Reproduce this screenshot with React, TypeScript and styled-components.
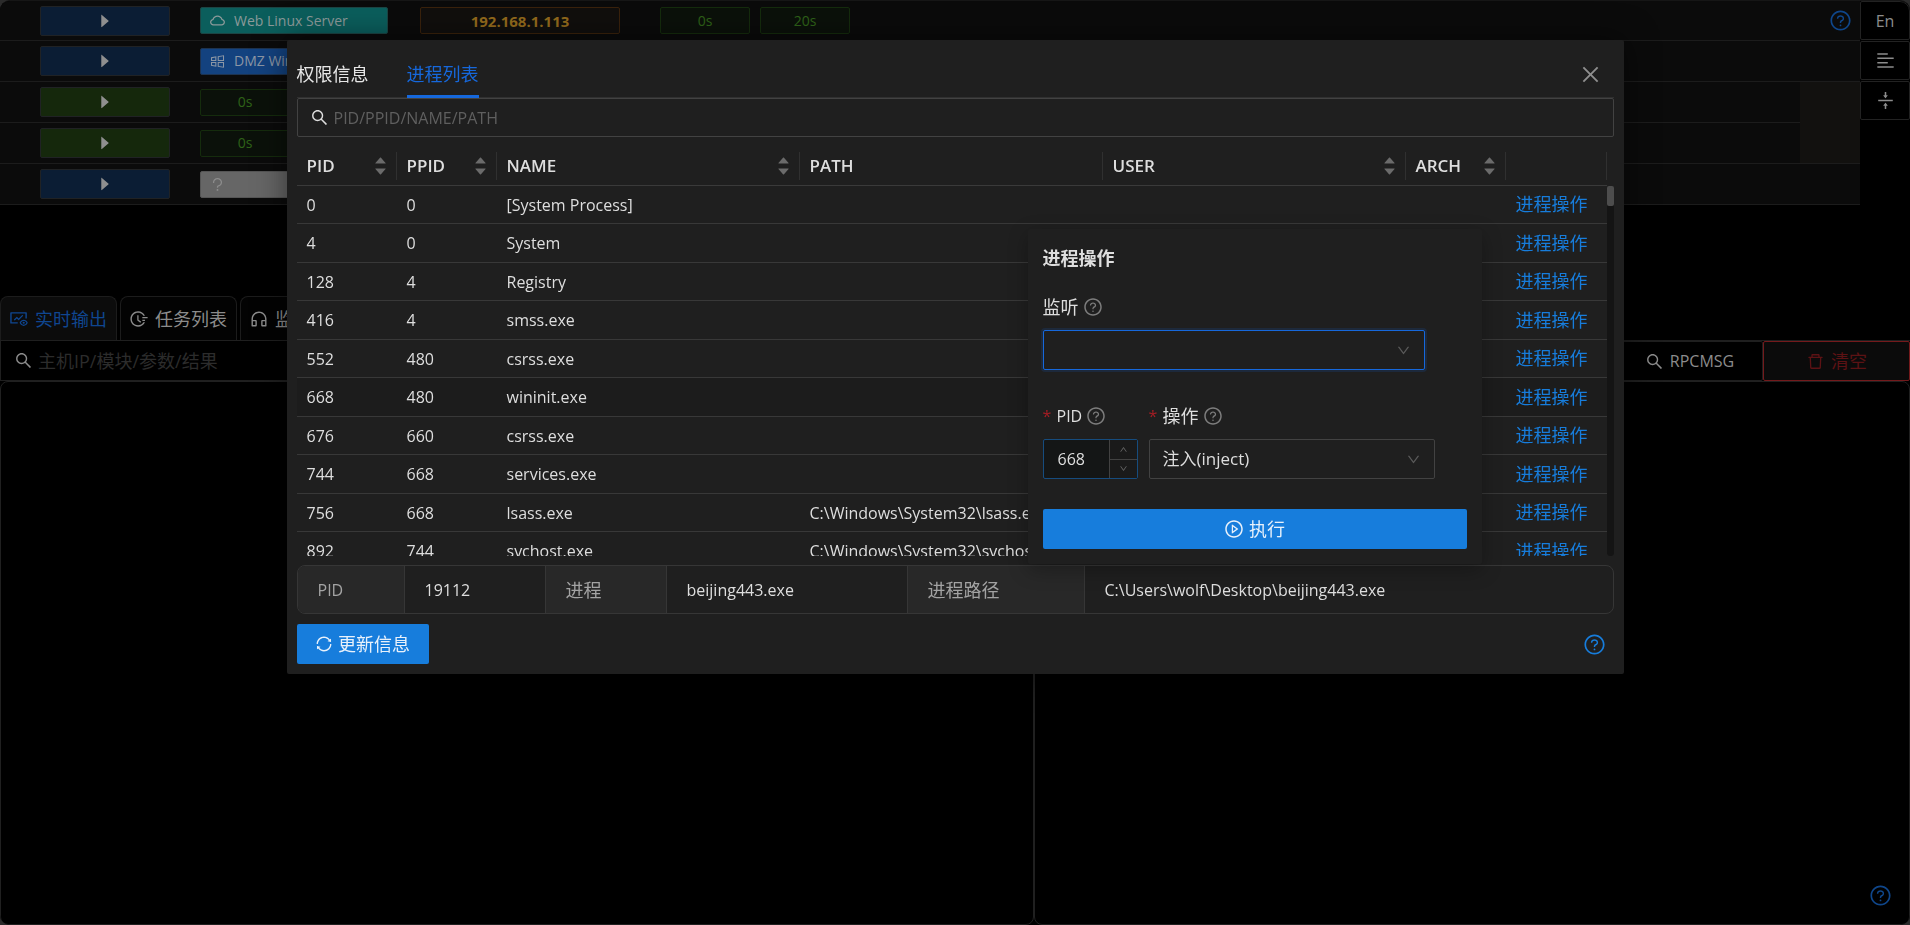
import React from "react";
import styled, { createGlobalStyle, css } from "styled-components";
import {
  AiFillCaretDown,
  AiFillCaretRight,
  AiFillCaretUp,
  AiOutlineAlignLeft,
  AiOutlineClose,
  AiOutlineCloud,
  AiOutlineCustomerService,
  AiOutlineDelete,
  AiOutlineDown,
  AiOutlineFieldTime,
  AiOutlineFundView,
  AiOutlinePlayCircle,
  AiOutlineQuestion,
  AiOutlineQuestionCircle,
  AiOutlineSearch,
  AiOutlineSync,
  AiOutlineUp,
  AiOutlineVerticalAlignMiddle,
  AiOutlineWindows,
} from "react-icons/ai";

const GlobalStyle = createGlobalStyle`
  * { box-sizing: border-box; }
  body {
    margin: 0;
    background: #2b2b2b;
    overflow: hidden;
  }
  body, button, input, select, table {
    font-family: "Open Sans", "Noto Sans CJK SC", sans-serif;
    font-size: 16px;
    line-height: 24px;
  }
  button { cursor: pointer; }
  svg { display: block; flex: none; }
`;

/* ---------- Host console behind the dialog ---------- */

const Page = styled.div`
  display: flex;
  flex-direction: column;
  min-height: 100vh;
  border-top: 1px solid #161616;
  border-radius: 10px;
  overflow: hidden;
  background: #000;
  color: #8c8c8c;
`;

const TopArea = styled.div`
  display: flex;
  align-items: flex-start;
  height: 295px;
`;

const HostTableWrap = styled.div`
  flex: 1;
  min-width: 0;
`;

const HostTable = styled.table`
  width: 100%;
  table-layout: fixed;
  border-collapse: separate;
  border-spacing: 0;
  background: #0b0b0b;
`;

const HostRow = styled.tr`
  height: 41px;
  &:first-child { height: 40px; }
`;

const HostCell = styled.td`
  padding: 0;
  border-bottom: 1px solid #1c1c1c;
`;

const PinnedCell = styled.td`
  padding: 0;
  background: #12110f;
  border-bottom: 1px solid #1c1c1c;
`;

const RowContent = styled.div`
  display: flex;
  align-items: center;
  padding-left: 40px;
`;

const ExpandButton = styled.button<{ $tone: "blue" | "green" }>`
  display: flex;
  align-items: center;
  justify-content: center;
  width: 130px;
  height: 30px;
  margin-right: 30px;
  padding: 0;
  border: 1px solid #202224;
  border-radius: 2px;
  color: #8f8f8f;
  background: ${(p) => (p.$tone === "blue" ? "#0b1d34" : "#15280c")};
`;

const tones = {
  cyan: css`background: #0b5e5c; border-color: #1c4544; color: #8c9a9a;`,
  blue: css`background: #13427f; border-color: #1d3350; color: #8b96a5;`,
  gray: css`background: #666; border-color: #555; color: #8c8c8c;`,
  orange: css`background: #110f0d; border-color: #3a220c; color: #936a1c;`,
  green: css`background: #0b110a; border-color: #152c0d; color: #2f6318;`,
};

const Tag = styled.span<{ $tone: keyof typeof tones; $width: number; $gap?: number }>`
  display: flex;
  align-items: center;
  justify-content: ${(p) => (p.$tone === "orange" || p.$tone === "green" ? "center" : "flex-start")};
  gap: 8px;
  width: ${(p) => p.$width}px;
  height: 27px;
  margin-right: ${(p) => p.$gap ?? 10}px;
  padding: 0 8px;
  border: 1px solid;
  border-radius: 2px;
  font-size: ${(p) => (p.$tone === "orange" ? 15 : 14)}px;
  font-weight: ${(p) => (p.$tone === "orange" ? 700 : 400)};
  white-space: nowrap;
  ${(p) => tones[p.$tone]}
`;

const RoundHelp = styled.button<{ $dim?: boolean }>`
  display: flex;
  padding: 0;
  margin: 0 8px 0 auto;
  border: 0;
  background: none;
  color: ${(p) => (p.$dim ? "#0f468a" : "#177ddc")};
`;

const SideRail = styled.nav`
  display: flex;
  flex-direction: column;
  gap: 1px;
  width: 50px;
`;

const RailButton = styled.button`
  display: flex;
  align-items: center;
  justify-content: center;
  height: 39px;
  padding: 0;
  border: 1px solid #222;
  border-radius: 2px;
  background: #000;
  color: #8c8c8c;
  &:first-child { border-top-right-radius: 10px; }
`;

const OutputTabs = styled.div`
  display: flex;
  gap: 3px;
  height: 45px;
  border-bottom: 1px solid #1f1f1f;
`;

const OutputTab = styled.button<{ $active?: boolean }>`
  display: flex;
  align-items: center;
  gap: 6px;
  width: 117px;
  padding: 0 0 0 8px;
  border: 1px solid #1c1c1c;
  border-bottom: 0;
  border-radius: 8px 8px 0 0;
  background: ${(p) => (p.$active ? "#0c0c0c" : "#030303")};
  color: ${(p) => (p.$active ? "#0f4690" : "#8c8c8c")};
  font-size: 18px;
  white-space: nowrap;
`;

const OutputToolbar = styled.div`
  display: flex;
  height: 40px;
`;

const OutputSearch = styled.label`
  display: flex;
  flex: 1;
  align-items: center;
  gap: 5px;
  padding-left: 13px;
  border: 1px solid #1f1f1f;
  border-top: 0;
`;

const ToolbarButton = styled.button<{ $danger?: boolean }>`
  display: flex;
  align-items: center;
  justify-content: center;
  gap: 6px;
  width: 147px;
  padding: 0;
  border: 1px solid ${(p) => (p.$danger ? "#741a1c" : "#1f1f1f")};
  border-radius: 2px;
  background: ${(p) => (p.$danger ? "#0b0b0b" : "#000")};
  color: ${(p) => (p.$danger ? "#5c1214" : "#8c8c8c")};
`;

const ToolbarText = styled.span<{ $cjk?: boolean }>`
  font-size: ${(p) => (p.$cjk ? 18 : 16)}px;
`;

const OutputPanels = styled.div`
  display: flex;
  flex: 1;
`;

const Panel = styled.section<{ $grow: number }>`
  display: flex;
  flex: ${(p) => p.$grow} 1 0;
  align-items: flex-end;
  justify-content: flex-end;
  padding: 0 9px 17px 0;
  border: 1px solid #202020;
  border-radius: 8px;
`;

/* ---------- Process dialog ---------- */

const Overlay = styled.div`
  position: fixed;
  inset: 0;
  display: flex;
  align-items: flex-start;
  justify-content: center;
  padding-top: 40px;
`;

const Dialog = styled.div`
  position: relative;
  width: 70%;
  padding: 0 10px 10px;
  border-radius: 2px;
  background: #1f1f1f;
  color: #dedede;
  box-shadow: 0 0 32px rgba(0, 0, 0, 0.5);
`;

const DialogHeader = styled.div`
  display: flex;
  align-items: center;
  height: 58px;
  border-bottom: 1px solid #303030;
`;

const DialogTab = styled.button<{ $active?: boolean }>`
  height: 58px;
  margin-right: 38px;
  padding: 14px 0 0;
  border: 0;
  border-bottom: 3px solid ${(p) => (p.$active ? "#1668dc" : "transparent")};
  background: none;
  color: ${(p) => (p.$active ? "#1668dc" : "#e6e6e6")};
  font-size: 18px;
`;

const CloseButton = styled.button`
  display: flex;
  margin: 12px 12px 0 auto;
  padding: 0;
  border: 0;
  background: none;
  color: #8f8f8f;
`;

const ProcessSearch = styled.label`
  display: flex;
  align-items: center;
  gap: 5px;
  height: 39px;
  padding-left: 12px;
  border: 1px solid #424242;
  border-radius: 2px;
`;

const TextInput = styled.input<{ $dim?: boolean; $cjk?: boolean }>`
  flex: 1;
  min-width: 0;
  padding: 0;
  border: 0;
  outline: 0;
  background: none;
  color: inherit;
  font-size: ${(p) => (p.$cjk ? 18 : 16)}px;
  &::placeholder {
    color: ${(p) => (p.$dim ? "#2c2c2c" : "#5f5f5f")};
    opacity: 1;
  }
`;

const TableViewport = styled.div`
  display: flex;
  height: 419px;
  overflow: hidden;
`;

const TableScroller = styled.div`
  flex: 1;
  min-width: 0;
`;

const ProcessTable = styled.table`
  width: 100%;
  table-layout: fixed;
  border-collapse: separate;
  border-spacing: 0;
`;

const HeadCell = styled.th`
  height: 49px;
  padding: 9px 0 0;
  border-bottom: 1px solid #3a3a3a;
  text-align: left;
  font-size: 17px;
  font-weight: 600;
`;

const HeadInner = styled.div`
  display: flex;
  align-items: center;
  justify-content: space-between;
  height: 28px;
  padding: 0 8px 0 10px;
  border-right: 1px solid #303030;
`;

const Sorter = styled.span`
  display: flex;
  flex-direction: column;
  color: #6b6b6b;
  svg + svg { margin-top: -4px; }
`;

const ProcessRow = styled.tr<{ $hovered: boolean }>`
  height: 38px;
  background: ${(p) => (p.$hovered ? "#1c1c1c" : "transparent")};
  &:nth-child(even) { height: 39px; }
`;

const Cell = styled.td`
  padding: 0 0 0 10px;
  border-bottom: 1px solid #383838;
  white-space: nowrap;
`;

const ActionLink = styled.a`
  color: #177ddc;
  font-size: 18px;
  text-decoration: none;
`;

const ScrollTrack = styled.div`
  width: 7px;
  margin-top: 49px;
  border-radius: 4px;
  background: #141414;
`;

const ScrollThumb = styled.div`
  height: 20px;
  border-radius: 2px;
  background: #4d4d4d;
`;

const Details = styled.dl`
  display: flex;
  height: 49px;
  margin: 9px 0 10px;
  border: 1px solid #363636;
  border-radius: 8px;
  overflow: hidden;
`;

const DetailLabel = styled.dt<{ $width: number; $cjk?: boolean }>`
  width: ${(p) => p.$width}px;
  padding: 12px 20px 0;
  border-right: 1px solid #363636;
  background: #282828;
  color: #a3a3a3;
  font-size: ${(p) => (p.$cjk ? 18 : 16)}px;
`;

const DetailValue = styled.dd<{ $width?: number }>`
  width: ${(p) => (p.$width ? `${p.$width}px` : "auto")};
  margin: 0;
  padding: 12px 20px 0;
  border-right: ${(p) => (p.$width ? "1px solid #363636" : "0")};
`;

const DialogFooter = styled.div`
  display: flex;
  align-items: center;
`;

const PrimaryButton = styled.button<{ $block?: boolean }>`
  display: flex;
  align-items: center;
  justify-content: center;
  gap: 5px;
  width: ${(p) => (p.$block ? "100%" : "132px")};
  height: 40px;
  padding: 0;
  border: 0;
  border-radius: 2px;
  background: #177ddc;
  color: #e8f1fb;
  font-size: 18px;
`;

/* ---------- Action popover ---------- */

const Popover = styled.form`
  position: absolute;
  top: 189px;
  right: 142px;
  width: 454px;
  padding: 15px;
  border-radius: 2px;
  background: #1f1f1f;
  box-shadow: 0 6px 20px rgba(0, 0, 0, 0.28);
`;

const PopoverTitle = styled.h3`
  margin: 0 0 21px;
  font-size: 18px;
  line-height: 28px;
  font-weight: 700;
`;

const FieldGroup = styled.div`
  display: flex;
  gap: 11px;
  margin-bottom: 32px;
  & + & { margin-bottom: 30px; }
`;

const Field = styled.div<{ $width: number }>`
  width: ${(p) => p.$width}px;
`;

const FieldLabel = styled.label<{ $latin?: boolean }>`
  display: flex;
  align-items: center;
  gap: 4px;
  height: 28px;
  margin-bottom: 9px;
  font-size: ${(p) => (p.$latin ? 16 : 18)}px;
  svg { color: #7d7d7d; }
`;

const Required = styled.span`
  width: 10px;
  color: #a61d24;
  font-size: 16px;
`;

const SelectWrap = styled.div`
  display: grid;
  align-items: center;
  > * { grid-area: 1 / 1; }
  svg {
    justify-self: end;
    margin-right: 14px;
    color: #5a5a5a;
    pointer-events: none;
  }
`;

const Select = styled.select<{ $focused?: boolean }>`
  appearance: none;
  width: 100%;
  height: 40px;
  padding: 0 13px;
  border: 1px solid ${(p) => (p.$focused ? "#1668dc" : "#424242")};
  border-radius: 2px;
  outline: 0;
  background: #1f1f1f;
  color: #dedede;
  font-size: 17px;
  box-shadow: ${(p) => (p.$focused ? "0 0 0 2px rgba(22, 104, 220, 0.15)" : "none")};
`;

const NumberBox = styled.div`
  display: flex;
  height: 40px;
  border: 1px solid #164c7e;
  border-radius: 2px;
  background: #141616;
`;

const NumberInput = styled.input`
  flex: 1;
  min-width: 0;
  padding: 0 0 0 14px;
  border: 0;
  outline: 0;
  background: none;
  color: #dedede;
`;

const Stepper = styled.div`
  display: flex;
  flex-direction: column;
  width: 28px;
  border-left: 1px solid #424242;
  background: #1a1a1a;
`;

const StepButton = styled.button`
  display: flex;
  flex: 1;
  align-items: center;
  justify-content: center;
  padding: 0;
  border: 0;
  background: none;
  color: #6b6b6b;
  & + & { border-top: 1px solid #424242; }
`;

type Process = { pid: number; ppid: number; name: string; path?: string };

const processes: Process[] = [
  { pid: 0, ppid: 0, name: "[System Process]" },
  { pid: 4, ppid: 0, name: "System" },
  { pid: 128, ppid: 4, name: "Registry" },
  { pid: 416, ppid: 4, name: "smss.exe" },
  { pid: 552, ppid: 480, name: "csrss.exe" },
  { pid: 668, ppid: 480, name: "wininit.exe" },
  { pid: 676, ppid: 660, name: "csrss.exe" },
  { pid: 744, ppid: 668, name: "services.exe" },
  { pid: 756, ppid: 668, name: "lsass.exe", path: "C:\\Windows\\System32\\lsass.exe" },
  { pid: 892, ppid: 744, name: "svchost.exe", path: "C:\\Windows\\System32\\svchost.exe" },
];

const columns: { title: string; width?: number; sortable?: boolean }[] = [
  { title: "PID", width: 100, sortable: true },
  { title: "PPID", width: 100, sortable: true },
  { title: "NAME", sortable: true },
  { title: "PATH" },
  { title: "USER", sortable: true },
  { title: "ARCH", width: 100, sortable: true },
  { title: "", width: 101 },
];

function Expand({ tone }: { tone: "blue" | "green" }) {
  return (
    <ExpandButton type="button" $tone={tone} aria-label="展开">
      <AiFillCaretRight size={18} />
    </ExpandButton>
  );
}

function Hosts() {
  return (
    <HostTableWrap>
      <HostTable>
        <colgroup>
          <col />
          <col style={{ width: 60 }} />
        </colgroup>
        <tbody>
          <HostRow>
            <HostCell>
              <RowContent>
                <Expand tone="blue" />
                <Tag $tone="cyan" $width={188} $gap={32}>
                  <AiOutlineCloud size={17} />
                  Web Linux Server
                </Tag>
                <Tag $tone="orange" $width={200} $gap={40}>192.168.1.113</Tag>
                <Tag $tone="green" $width={90}>0s</Tag>
                <Tag $tone="green" $width={90}>20s</Tag>
              </RowContent>
            </HostCell>
            <HostCell>
              <RoundHelp type="button" $dim aria-label="帮助">
                <AiOutlineQuestionCircle size={23} />
              </RoundHelp>
            </HostCell>
          </HostRow>
          <HostRow>
            <HostCell colSpan={2}>
              <RowContent>
                <Expand tone="blue" />
                <Tag $tone="blue" $width={188}>
                  <AiOutlineWindows size={17} />
                  DMZ Windows
                </Tag>
              </RowContent>
            </HostCell>
          </HostRow>
          <HostRow>
            <HostCell>
              <RowContent>
                <Expand tone="green" />
                <Tag $tone="green" $width={90}>0s</Tag>
              </RowContent>
            </HostCell>
            <PinnedCell rowSpan={2} />
          </HostRow>
          <HostRow>
            <HostCell>
              <RowContent>
                <Expand tone="green" />
                <Tag $tone="green" $width={90}>0s</Tag>
              </RowContent>
            </HostCell>
          </HostRow>
          <HostRow>
            <HostCell colSpan={2}>
              <RowContent>
                <Expand tone="blue" />
                <Tag $tone="gray" $width={188}>
                  <AiOutlineQuestion size={17} />
                </Tag>
              </RowContent>
            </HostCell>
          </HostRow>
        </tbody>
      </HostTable>
    </HostTableWrap>
  );
}

function ActionPopover() {
  return (
    <Popover onSubmit={(e) => e.preventDefault()}>
      <PopoverTitle>进程操作</PopoverTitle>
      <FieldGroup>
        <Field $width={382}>
          <FieldLabel htmlFor="listener">
            监听 <AiOutlineQuestionCircle size={20} />
          </FieldLabel>
          <SelectWrap>
            <Select id="listener" $focused defaultValue="">
              <option value=""></option>
            </Select>
            <AiOutlineDown size={15} />
          </SelectWrap>
        </Field>
      </FieldGroup>
      <FieldGroup>
        <Field $width={95}>
          <FieldLabel htmlFor="pid" $latin>
            <Required>*</Required>PID <AiOutlineQuestionCircle size={20} />
          </FieldLabel>
          <NumberBox>
            <NumberInput id="pid" type="text" inputMode="numeric" defaultValue="668" />
            <Stepper>
              <StepButton type="button" aria-label="增加"><AiOutlineUp size={9} /></StepButton>
              <StepButton type="button" aria-label="减少"><AiOutlineDown size={9} /></StepButton>
            </Stepper>
          </NumberBox>
        </Field>
        <Field $width={286}>
          <FieldLabel htmlFor="action">
            <Required>*</Required>操作 <AiOutlineQuestionCircle size={20} />
          </FieldLabel>
          <SelectWrap>
            <Select id="action" defaultValue="inject">
              <option value="inject">注入(inject)</option>
            </Select>
            <AiOutlineDown size={15} />
          </SelectWrap>
        </Field>
      </FieldGroup>
      <PrimaryButton type="submit" $block>
        <AiOutlinePlayCircle size={20} />
        执行
      </PrimaryButton>
    </Popover>
  );
}

function ProcessDialog() {
  return (
    <Overlay>
      <Dialog role="dialog" aria-label="进程列表">
        <DialogHeader>
          <DialogTab type="button">权限信息</DialogTab>
          <DialogTab type="button" $active>进程列表</DialogTab>
          <CloseButton type="button" aria-label="关闭">
            <AiOutlineClose size={23} />
          </CloseButton>
        </DialogHeader>
        <ProcessSearch>
          <AiOutlineSearch size={19} />
          <TextInput type="text" placeholder="PID/PPID/NAME/PATH" aria-label="PID/PPID/NAME/PATH" />
        </ProcessSearch>
        <TableViewport>
          <TableScroller>
            <ProcessTable>
              <colgroup>
                {columns.map((c, i) => (
                  <col key={i} style={{ width: c.width }} />
                ))}
              </colgroup>
              <thead>
                <tr>
                  {columns.map((c, i) => (
                    <HeadCell key={i} scope="col">
                      <HeadInner>
                        {c.title}
                        {c.sortable && (
                          <Sorter>
                            <AiFillCaretUp size={15} />
                            <AiFillCaretDown size={15} />
                          </Sorter>
                        )}
                      </HeadInner>
                    </HeadCell>
                  ))}
                </tr>
              </thead>
              <tbody>
                {processes.map((p) => (
                  <ProcessRow key={p.pid} $hovered={p.pid === 668}>
                    <Cell>{p.pid}</Cell>
                    <Cell>{p.ppid}</Cell>
                    <Cell>{p.name}</Cell>
                    <Cell>{p.path}</Cell>
                    <Cell />
                    <Cell />
                    <Cell>
                      <ActionLink href="#">进程操作</ActionLink>
                    </Cell>
                  </ProcessRow>
                ))}
              </tbody>
            </ProcessTable>
          </TableScroller>
          <ScrollTrack>
            <ScrollThumb />
          </ScrollTrack>
        </TableViewport>
        <Details>
          <DetailLabel $width={107}>PID</DetailLabel>
          <DetailValue $width={141}>19112</DetailValue>
          <DetailLabel $width={121} $cjk>进程</DetailLabel>
          <DetailValue $width={241}>beijing443.exe</DetailValue>
          <DetailLabel $width={177} $cjk>进程路径</DetailLabel>
          <DetailValue>C:\Users\wolf\Desktop\beijing443.exe</DetailValue>
        </Details>
        <DialogFooter>
          <PrimaryButton type="button">
            <AiOutlineSync size={18} />
            更新信息
          </PrimaryButton>
          <RoundHelp type="button" aria-label="帮助">
            <AiOutlineQuestionCircle size={23} />
          </RoundHelp>
        </DialogFooter>
        <ActionPopover />
      </Dialog>
    </Overlay>
  );
}

export default function App() {
  return (
    <>
      <GlobalStyle />
      <Page>
        <TopArea>
          <Hosts />
          <SideRail>
            <RailButton type="button">En</RailButton>
            <RailButton type="button" aria-label="列表"><AiOutlineAlignLeft size={21} /></RailButton>
            <RailButton type="button" aria-label="折叠"><AiOutlineVerticalAlignMiddle size={21} /></RailButton>
          </SideRail>
        </TopArea>
        <OutputTabs>
          <OutputTab type="button" $active><AiOutlineFundView size={20} />实时输出</OutputTab>
          <OutputTab type="button"><AiOutlineFieldTime size={20} />任务列表</OutputTab>
          <OutputTab type="button"><AiOutlineCustomerService size={20} />监听</OutputTab>
        </OutputTabs>
        <OutputToolbar>
          <OutputSearch>
            <AiOutlineSearch size={19} />
            <TextInput type="text" $dim $cjk placeholder="主机IP/模块/参数/结果" aria-label="主机IP/模块/参数/结果" />
          </OutputSearch>
          <ToolbarButton type="button">
            <AiOutlineSearch size={19} />
            <ToolbarText>RPCMSG</ToolbarText>
          </ToolbarButton>
          <ToolbarButton type="button" $danger>
            <AiOutlineDelete size={19} />
            <ToolbarText $cjk>清空</ToolbarText>
          </ToolbarButton>
        </OutputToolbar>
        <OutputPanels>
          <Panel $grow={1035} />
          <Panel $grow={875}>
            <RoundHelp type="button" $dim aria-label="帮助">
              <AiOutlineQuestionCircle size={23} />
            </RoundHelp>
          </Panel>
        </OutputPanels>
      </Page>
      <ProcessDialog />
    </>
  );
}
